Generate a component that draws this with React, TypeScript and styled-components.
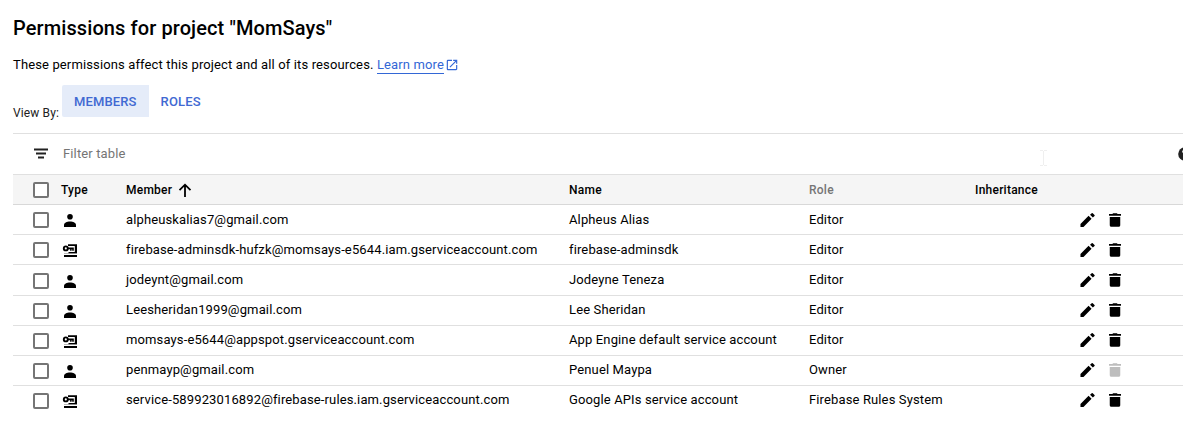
import React from 'react';
import styled, { createGlobalStyle } from 'styled-components';

const GlobalStyle = createGlobalStyle`
  html, body { margin: 0; background: #fff; overflow: hidden; }
  * { box-sizing: border-box; }
  body { font-family: Roboto, "Liberation Sans", sans-serif; font-size: 13px; color: #000; letter-spacing: 0.13px; }
`;

const Page = styled.main`
  width: 1183px;
  height: 445px;
  padding: 16px 0 0 13px;
  overflow: hidden;
`;
const Title = styled.h1`
  margin: 0;
  font-size: 20px;
  line-height: 24px;
  font-weight: 500;
  letter-spacing: 0.1px;
  white-space: nowrap;
`;
const Description = styled.p`
  display: flex;
  align-items: flex-start;
  margin: 15px 0 0;
  height: 30px;
  line-height: 20px;
  white-space: pre;
`;
const LearnMore = styled.a`
  display: flex;
  align-items: flex-start;
  color: #3367d6;
  gap: 1px;
  svg { margin-top: 3px; }
`;
const LinkText = styled.span`
  height: 19px;
  border-bottom: 1px solid #3367d6;
`;
const ViewBar = styled.div`
  display: flex;
  height: 48px;
`;
const ViewLabel = styled.span`
  width: 49px;
  padding-top: 20px;
  font-size: 12px;
  line-height: 16px;
  color: #212121;
  white-space: nowrap;
`;
const ViewButton = styled.button<{ $active?: boolean }>`
  height: 32px;
  padding: 1px 12px 0;
  border: 0;
  border-radius: 2px 0 0 2px;
  background: ${p => (p.$active ? '#e5ecf9' : 'transparent')};
  color: #4169d2;
  font: 500 13px/31px Roboto, sans-serif;
  letter-spacing: 0.13px;
`;
const Panel = styled.section`
  border-top: 1px solid #e0e0e0;
`;
const FilterBar = styled.div`
  display: flex;
  height: 40px;
  align-items: center;
  color: #757575;
  padding-left: 20px;
  svg { flex-shrink: 0; }
`;
const FilterLabel = styled.span`
  margin-left: 14px;
  flex: 0 0 977px;
  line-height: 20px;
`;
const Caret = styled.span`
  display: flex;
  flex: 0 0 138px;
  margin-top: 7px;
`;
const Row = styled.div<{ $tall?: boolean; $head?: boolean; $last?: boolean }>`
  display: grid;
  grid-template-columns: 48px 65px 443px 240px 166px 103px 28px 1fr;
  align-items: start;
  height: ${p => (p.$tall ? 31 : 30)}px;
  border-bottom: 1px solid ${p => (p.$last ? 'transparent' : '#e0e0e0')};
  ${p => p.$head && `
    height: 31px;
    background: #f5f5f5;
    border-top: 1px solid #e0e0e0;
    border-bottom-color: #d8d8d8;
    font-size: 12px;
    font-weight: 500;
    letter-spacing: 0.24px;
  `}
`;
const Cell = styled.div<{ $muted?: boolean; $shift?: number }>`
  display: flex;
  align-items: center;
  gap: 6px;
  line-height: 20px;
  padding-top: ${p => 5 - (p.$shift || 0)}px;
  white-space: nowrap;
  color: ${p => (p.$muted ? '#757575' : 'inherit')};
`;
const Checkbox = styled.span<{ $drop?: boolean }>`
  width: 16px;
  height: 16px;
  margin: ${p => (p.$drop ? 8 : 7)}px 0 0 20px;
  border: 2px solid #757575;
  border-radius: 2px;
  background: #fff;
`;
const TypeCell = styled.span<{ $drop?: boolean }>`
  display: flex;
  padding-top: ${p => (p.$drop ? 8 : 7)}px;
`;
const Action = styled.span<{ $disabled?: boolean; $shift?: number }>`
  display: flex;
  padding-top: ${p => 6 - (p.$shift || 0)}px;
  color: ${p => (p.$disabled ? '#bdbdbd' : '#000')};
`;

type GlyphProps = { d: string; size: number };
const Glyph = ({ d, size }: GlyphProps) => (
  <svg width={size} height={size} viewBox="0 0 24 24" fill="currentColor"><path d={d} /></svg>
);
const PENCIL = 'M3.300 17.250V21.300h4L18.100 10.400l-4-4-10.800 10.850zM22 6.700a1 1 0 0 0 0-1.410l-2.340-2.340a1 1 0 0 0-1.410 0l-2.200 2.100 3.750 3.750 2.200-2.100z';
const TRASH = 'M5 19c0 1.100.9 2 2 2h10c1.100 0 2-.9 2-2V8H5v11zM20 4h-4.500l-1-1h-5l-1 1H4v2.300h16V4z';
const OPEN = 'M19 19H5V5h7V3H5a2 2 0 0 0-2 2v14a2 2 0 0 0 2 2h14c1.100 0 2-.9 2-2v-7h-2v7zM14 3v2h3.590l-9.830 9.830 1.410 1.410L19 6.410V10h2V3h-7z';

const PersonIcon = () => (
  <svg width="18" height="18" viewBox="0 0 18 18"><circle cx="9" cy="4.800" r="2.800" /><path d="M3 15v-1.800c0-2.300 2.700-3.600 6-3.600s6 1.300 6 3.600V15z" /></svg>
);
const ServiceIcon = () => (
  <svg width="18" height="18" viewBox="0 0 18 18">
    <path d="M7 2.300H16v8.900H7.500V9.900H13.800V4H7z" />
    <path d="M3 11h13v.7H3z" opacity=".4" />
    <path d="M3 13h13v2H3z" />
    <circle cx="4.800" cy="6.400" r="2" fill="#fff" stroke="#000" strokeWidth="1.900" />
    <path d="M6.600 5.400h6.200v3.300h-1.600V7.300h-.6v1.400H9.100V7.300H6.600z" />
  </svg>
);

type Member = { kind: 'user' | 'service'; email: string; name: string; role: string; locked?: boolean };
const members: Member[] = [
  { kind: 'user', email: 'alpheuskalias7@gmail.com', name: 'Alpheus Alias', role: 'Editor' },
  { kind: 'service', email: 'firebase-adminsdk-hufzk@momsays-e5644.iam.gserviceaccount.com', name: 'firebase-adminsdk', role: 'Editor' },
  { kind: 'user', email: 'jodeynt@gmail.com', name: 'Jodeyne Teneza', role: 'Editor' },
  { kind: 'user', email: 'Leesheridan1999@gmail.com', name: 'Lee Sheridan', role: 'Editor' },
  { kind: 'service', email: 'momsays-e5644@appspot.gserviceaccount.com', name: 'App Engine default service account', role: 'Editor' },
  { kind: 'user', email: 'penmayp@gmail.com', name: 'Penuel Maypa', role: 'Owner', locked: true },
  { kind: 'service', email: 'service-589923016892@firebase-rules.iam.gserviceaccount.com', name: 'Google APIs service account', role: 'Firebase Rules System' },
];

export default function App() {
  return (
    <>
      <GlobalStyle />
      <Page>
        <Title>Permissions for project "MomSays"</Title>
        <Description>
          {'These permissions affect this project and all of its resources. '}
          <LearnMore><LinkText>Learn more</LinkText><Glyph d={OPEN} size={14} /></LearnMore>
        </Description>
        <ViewBar>
          <ViewLabel>View By:</ViewLabel>
          <ViewButton $active>MEMBERS</ViewButton>
          <ViewButton>ROLES</ViewButton>
        </ViewBar>
        <Panel>
          <FilterBar>
            <svg width="16" height="12" viewBox="0 0 16 12" fill="#212121"><path d="M1 .5h14v2H1zM3 4.500h10v2H3zM5 8.500h6v2H5z" /></svg>
            <FilterLabel>Filter table</FilterLabel>
            <Caret><svg width="7" height="16" viewBox="0 0 7 16" fill="none" stroke="#efefef"><path d="M0 .5h3M4 .5h3M3.500 1v14M0 15.500h3M4 15.500h3" /></svg></Caret>
            <svg width="14" height="14" viewBox="0 0 14 14"><circle cx="7" cy="7" r="6.800" fill="#212121" /><path d="M4.700 5.500a2.500 2.500 0 1 1 3 2.500v1" fill="none" stroke="#fff" strokeWidth="1.300" /></svg>
          </FilterBar>
          <Row $head>
            <Checkbox />
            <Cell>Type</Cell>
            <Cell>Member<svg width="14" height="14" viewBox="0 0 14 14" fill="none" stroke="#000" strokeWidth="1.800"><path d="M7 14V2M1.500 7.200 7 1.700l5.500 5.500" /></svg></Cell>
            <Cell>Name</Cell>
            <Cell $muted>Role</Cell>
            <Cell>Inheritance</Cell>
          </Row>
          {members.map((m, i) => {
            const shift = i > 2 ? 1 : 0;
            return (
              <Row key={m.email} $tall={i === 2} $last={i === members.length - 1}>
                <Checkbox $drop={i === 2} />
                <TypeCell $drop={i === 2}>{m.kind === 'user' ? <PersonIcon /> : <ServiceIcon />}</TypeCell>
                <Cell $shift={shift}>{m.email}</Cell>
                <Cell $shift={shift}>{m.name}</Cell>
                <Cell $shift={shift}>{m.role}</Cell>
                <span />
                <Action $shift={shift}><Glyph d={PENCIL} size={18} /></Action>
                <Action $shift={shift} $disabled={m.locked}><Glyph d={TRASH} size={18} /></Action>
              </Row>
            );
          })}
        </Panel>
      </Page>
    </>
  );
}
